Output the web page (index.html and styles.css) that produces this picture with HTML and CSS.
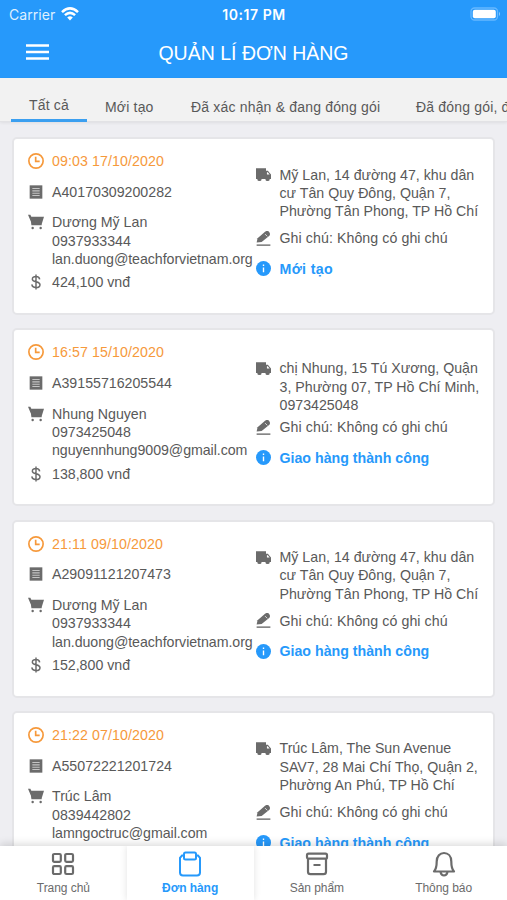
FILE: index.html
```
<!DOCTYPE html>
<html lang="vi">
<head>
<meta charset="utf-8">
<title>Quản lí đơn hàng</title>
<link rel="stylesheet" href="styles.css">
</head>
<body>
<svg width="0" height="0" class="defs">
  <symbol id="clock" viewBox="0 0 24 24"><circle cx="12" cy="12" r="10.7" fill="none" stroke="currentColor" stroke-width="2.500"/><path d="M11.500 5.800v6.700h6" fill="none" stroke="currentColor" stroke-width="2.500"/></symbol>
  <symbol id="receipt" viewBox="0 0 24 24"><path fill="currentColor" d="M2.500 2h19v20h-19z"/><path d="M6.500 6.800h11M6.500 10.300h11M6.500 13.800h11M6.500 17.300h11" stroke="#c4c4c4" stroke-width="1.600"/></symbol>
  <symbol id="cart" viewBox="0 0 24 24"><path d="M0 1h3.500l1.500 3h19l-3.500 11.500H6z" fill="currentColor"/><path d="M5.500 10L6 16h14.500" fill="none" stroke="currentColor" stroke-width="2"/><circle cx="7" cy="21" r="1.800" fill="currentColor"/><circle cx="19" cy="21" r="1.800" fill="currentColor"/></symbol>
  <symbol id="dollar" viewBox="0 0 24 24"><path d="M17.500 8c-.3-3-2.300-4.300-5.500-4.300S6.500 5.200 6.500 7.700c0 5.600 11.500 2.300 11.500 8.300 0 2.800-2.500 4.300-6 4.300S6 18.800 5.800 15.600M12 .8v22.400" fill="none" stroke="currentColor" stroke-width="2.200"/></symbol>
  <symbol id="truck" viewBox="0 0 24 24"><path fill="currentColor" d="M0 2h16v4h3l5 6v7h-2a3.500 3.500 0 0 1-7 0H9a3.500 3.500 0 0 1-7 0H0z"/><path fill="#fff" d="M17.500 8.500h1.300l3 3.500h-4.300z"/></symbol>
  <symbol id="pen" viewBox="0 0 24 24"><path fill="currentColor" d="M1 18.500l1.500-7L14.500 1q4-2.500 6.500.5t.5 6L9 17.500z"/><path d="M14.500 5l3.500 3.500" stroke="#fff" stroke-width="1.200"/><path fill="currentColor" d="M1 21.500h22v2.200H1z"/></symbol>
  <symbol id="info" viewBox="0 0 24 24"><circle cx="12" cy="12" r="12" fill="currentColor"/><path d="M12 5.500v2.600M12 10.300V18" stroke="#fff" stroke-width="2.200"/></symbol>
</svg>
<div class="app">
  <header class="top">
    <div class="status">
      <div class="carrier"><span>Carrier</span>
        <svg width="18" height="14" viewBox="0 0 18 14" fill="none" stroke="#fff" stroke-width="2.500"><path d="M1 5.200Q9-2.400 17 5.200M3.900 8.200q5.100-4.700 10.200 0"/><path d="M6.200 10.500q2.800-2.400 5.600 0L9 13.500z" fill="#fff" stroke="none"/></svg>
      </div>
      <div class="time">10:17 PM</div>
      <svg class="battery" width="31" height="14" viewBox="0 0 31 14"><rect x="1" y="1" width="26.500" height="12" rx="3.500" fill="none" stroke="#66b8ff" stroke-width="1.300"/><rect x="2.800" y="2.700" width="23" height="8.600" rx="2" fill="#fff"/><path d="M29 4.800q2 2.200 0 4.400z" fill="#8fcbff"/></svg>
    </div>
    <div class="bar">
      <svg class="menu" width="23" height="16" viewBox="0 0 23 16"><path d="M0 1.500h23M0 8h23M0 14.500h23" stroke="#fff" stroke-width="2.600"/></svg>
      <h1>QUẢN LÍ ĐƠN HÀNG</h1>
    </div>
  </header>
  <nav class="tabs">
    <span class="tab on">Tất cả</span><span class="tab t2">Mới tạo</span><span class="tab t3">Đã xác nhận &amp; đang đóng gói</span><span class="tab t4">Đã đóng gói, đang giao</span>
  </nav>
  <main class="list">
    <article class="card">
      <div class="left">
        <div class="row date"><svg><use href="#clock"/></svg><p>09:03 17/10/2020</p></div>
        <div class="row code"><svg><use href="#receipt"/></svg><p>A40170309200282</p></div>
        <div class="row who"><svg><use href="#cart"/></svg><p>Dương Mỹ Lan<br>0937933344<br><span class="mail">lan.duong@teachforvietnam.org</span></p></div>
        <div class="row price"><svg><use href="#dollar"/></svg><p>424,100 vnđ</p></div>
      </div>
      <div class="right">
        <div class="row addr"><svg><use href="#truck"/></svg><p>Mỹ Lan, 14 đường 47, khu dân<br>cư Tân Quy Đông, Quận 7,<br>Phường Tân Phong, TP Hồ Chí</p></div>
        <div class="row note"><svg><use href="#pen"/></svg><p>Ghi chú: Không có ghi chú</p></div>
        <div class="row state fresh"><svg><use href="#info"/></svg><p>Mới tạo</p></div>
      </div>
    </article>
    <article class="card tight">
      <div class="left">
        <div class="row date"><svg><use href="#clock"/></svg><p>16:57 15/10/2020</p></div>
        <div class="row code"><svg><use href="#receipt"/></svg><p>A39155716205544</p></div>
        <div class="row who"><svg><use href="#cart"/></svg><p>Nhung Nguyen<br>0973425048<br><span class="mail">nguyennhung9009@gmail.com</span></p></div>
        <div class="row price"><svg><use href="#dollar"/></svg><p>138,800 vnđ</p></div>
      </div>
      <div class="right">
        <div class="row addr"><svg><use href="#truck"/></svg><p>chị Nhung, 15 Tú Xương, Quận<br>3, Phường 07, TP Hồ Chí Minh,<br>0973425048</p></div>
        <div class="row note"><svg><use href="#pen"/></svg><p>Ghi chú: Không có ghi chú</p></div>
        <div class="row state"><svg><use href="#info"/></svg><p>Giao hàng thành công</p></div>
      </div>
    </article>
    <article class="card">
      <div class="left">
        <div class="row date"><svg><use href="#clock"/></svg><p>21:11 09/10/2020</p></div>
        <div class="row code"><svg><use href="#receipt"/></svg><p>A29091121207473</p></div>
        <div class="row who"><svg><use href="#cart"/></svg><p>Dương Mỹ Lan<br>0937933344<br><span class="mail">lan.duong@teachforvietnam.org</span></p></div>
        <div class="row price"><svg><use href="#dollar"/></svg><p>152,800 vnđ</p></div>
      </div>
      <div class="right">
        <div class="row addr"><svg><use href="#truck"/></svg><p>Mỹ Lan, 14 đường 47, khu dân<br>cư Tân Quy Đông, Quận 7,<br>Phường Tân Phong, TP Hồ Chí</p></div>
        <div class="row note"><svg><use href="#pen"/></svg><p>Ghi chú: Không có ghi chú</p></div>
        <div class="row state"><svg><use href="#info"/></svg><p>Giao hàng thành công</p></div>
      </div>
    </article>
    <article class="card">
      <div class="left">
        <div class="row date"><svg><use href="#clock"/></svg><p>21:22 07/10/2020</p></div>
        <div class="row code"><svg><use href="#receipt"/></svg><p>A55072221201724</p></div>
        <div class="row who"><svg><use href="#cart"/></svg><p>Trúc Lâm<br>0839442802<br><span class="mail">lamngoctruc@gmail.com</span></p></div>
      </div>
      <div class="right">
        <div class="row addr"><svg><use href="#truck"/></svg><p>Trúc Lâm, The Sun Avenue<br>SAV7, 28 Mai Chí Thọ, Quận 2,<br>Phường An Phú, TP Hồ Chí</p></div>
        <div class="row note"><svg><use href="#pen"/></svg><p>Ghi chú: Không có ghi chú</p></div>
        <div class="row state"><svg><use href="#info"/></svg><p>Giao hàng thành công</p></div>
      </div>
    </article>
  </main>
  <footer class="nav">
    <div class="item"><svg width="24" height="24" viewBox="0 0 24 24"><g fill="none" stroke="currentColor" stroke-width="2.200"><rect x="2" y="2" width="7.800" height="7.800" rx="1.300"/><rect x="14.200" y="2" width="7.800" height="7.800" rx="1.300"/><rect x="2" y="14.200" width="7.800" height="7.800" rx="1.300"/><rect x="14.200" y="14.200" width="7.800" height="7.800" rx="1.300"/></g></svg><span>Trang chủ</span></div>
    <div class="item active"><svg width="24" height="26" viewBox="0 0 24 26"><g fill="none" stroke="currentColor" stroke-width="2"><path d="M6 4.500H4L2 6.800V21.500q0 3 3 3h14q3 0 3-3V6.800L20 4.500h-2"/><rect x="6" y="1.500" width="12" height="7" rx="1.500"/></g></svg><span>Đơn hàng</span></div>
    <div class="item"><svg width="24" height="24" viewBox="0 0 24 24"><g fill="none" stroke="currentColor" stroke-width="2.200"><rect x="2" y="1.700" width="20" height="5" rx="1.500"/><path d="M3 6.700v13q0 2.500 2.500 2.500h13q2.500 0 2.500-2.500v-13M8.500 13h7"/></g></svg><span>Sản phẩm</span></div>
    <div class="item"><svg width="24" height="26" viewBox="0 0 24 26"><g fill="none" stroke="currentColor" stroke-width="2.200"><path d="M2 20.500Q4.700 17.500 4.700 10.500C4.700 5 8 2 12 2s7.300 3 7.300 8.500q0 7 2.700 10z" stroke-linejoin="round"/><path d="M8.500 21q.8 3.500 3.500 3.500t3.500-3.500"/></g></svg><span>Thông báo</span></div>
  </footer>
</div>
</body>
</html>
```
FILE: styles.css
```
* { box-sizing: border-box; }
body { margin: 0; background: #eeeef2; font-family: "Liberation Sans", Arial, sans-serif; color: #595959; }
p, h1 { margin: 0; }
.defs { position: absolute; }
.app { width: 507px; height: 900px; display: flex; flex-direction: column; overflow: hidden; }

.top { flex: none; height: 78px; background: #2699fb; color: #fff; }
.status { height: 27px; display: grid; grid-template-columns: 1fr auto 1fr; align-items: center; font-family: Inter, sans-serif; font-size: 14px; line-height: 27px; }
.carrier { display: flex; align-items: center; gap: 6px; padding-left: 9px; color: #dff0ff; letter-spacing: 0.05px; }
.time { font-weight: 600; font-size: 14px; letter-spacing: 0.55px; margin-right: -1px; padding-top: 1px; }
.battery { justify-self: end; margin-right: 6px; }
.bar { height: 51px; display: grid; grid-template-columns: 1fr auto 1fr; align-items: center; }
.menu { margin: 0 0 2px 26px; }
.bar h1 { font-size: 19.5px; font-weight: 400; line-height: 50px; white-space: nowrap; }

.tabs { flex: none; height: 44px; display: flex; background: #f2f2f2; border-bottom: 1px solid #e2e2e5; font-size: 14px; white-space: nowrap; box-shadow: 0 1px 3px #00000012; }
.tab { flex: none; line-height: 18px; padding-top: 20px; letter-spacing: 0.18px; }
.tab.on { width: 76px; height: 44px; margin-left: 11px; padding-top: 18px; text-align: center; border-bottom: 3px solid #3b9ff0; }
.t2 { width: 86px; margin-left: 18px; }
.t3 { width: 225px; }

.list { flex: 1; min-height: 0; padding: 15px 12px 0; overflow: hidden; display: flex; flex-direction: column; gap: 13.3px; }
.card { flex: none; height: 178px; display: flex; padding: 13px 0 0 14px; background: #fff; border: 2px solid #e5e5e8; border-radius: 5px; font-size: 14.2px; line-height: 18.3px; white-space: nowrap; }
.left { width: 228px; }
.row { display: flex; gap: 8px; }
.row svg { flex: none; width: 16px; height: 16px; margin-top: 1px; color: #6b6b6b; }
.date { color: #f6993b; letter-spacing: 0.1px; }
.date svg { color: #f6993b; }
.code, .who { margin-top: 12.4px; }
.mail { letter-spacing: -0.05px; }
.price { margin-top: 5px; }
.right { padding-top: 13.5px; }
.right .row { gap: 8.5px; }
.right .row svg { width: 15px; height: 15px; margin-top: 1.5px; }
.note { margin-top: 9px; }
.note p { letter-spacing: 0.07px; }
.state { margin-top: 12.2px; color: #2699fb; font-weight: 700; }
.fresh p { letter-spacing: 0.35px; }
.right .state svg { color: #2699fb; }
.tight .right { padding-top: 16px; }
.tight .note { margin-top: 4px; }

.nav { flex: none; height: 54px; display: flex; position: relative; background: #fff; box-shadow: 0 -2px 8px #00000026; }
.item { flex: 1; display: flex; flex-direction: column; align-items: center; color: #6b6b6b; font-size: 12px; letter-spacing: -0.05px; line-height: 16px; }
.item svg { height: 26px; margin-top: 5px; }
.item span { margin-top: 3px; }
.active { color: #2699fb; font-weight: 700; box-shadow: 0 0 7px #0000001f; clip-path: inset(0 -8px); }
```
